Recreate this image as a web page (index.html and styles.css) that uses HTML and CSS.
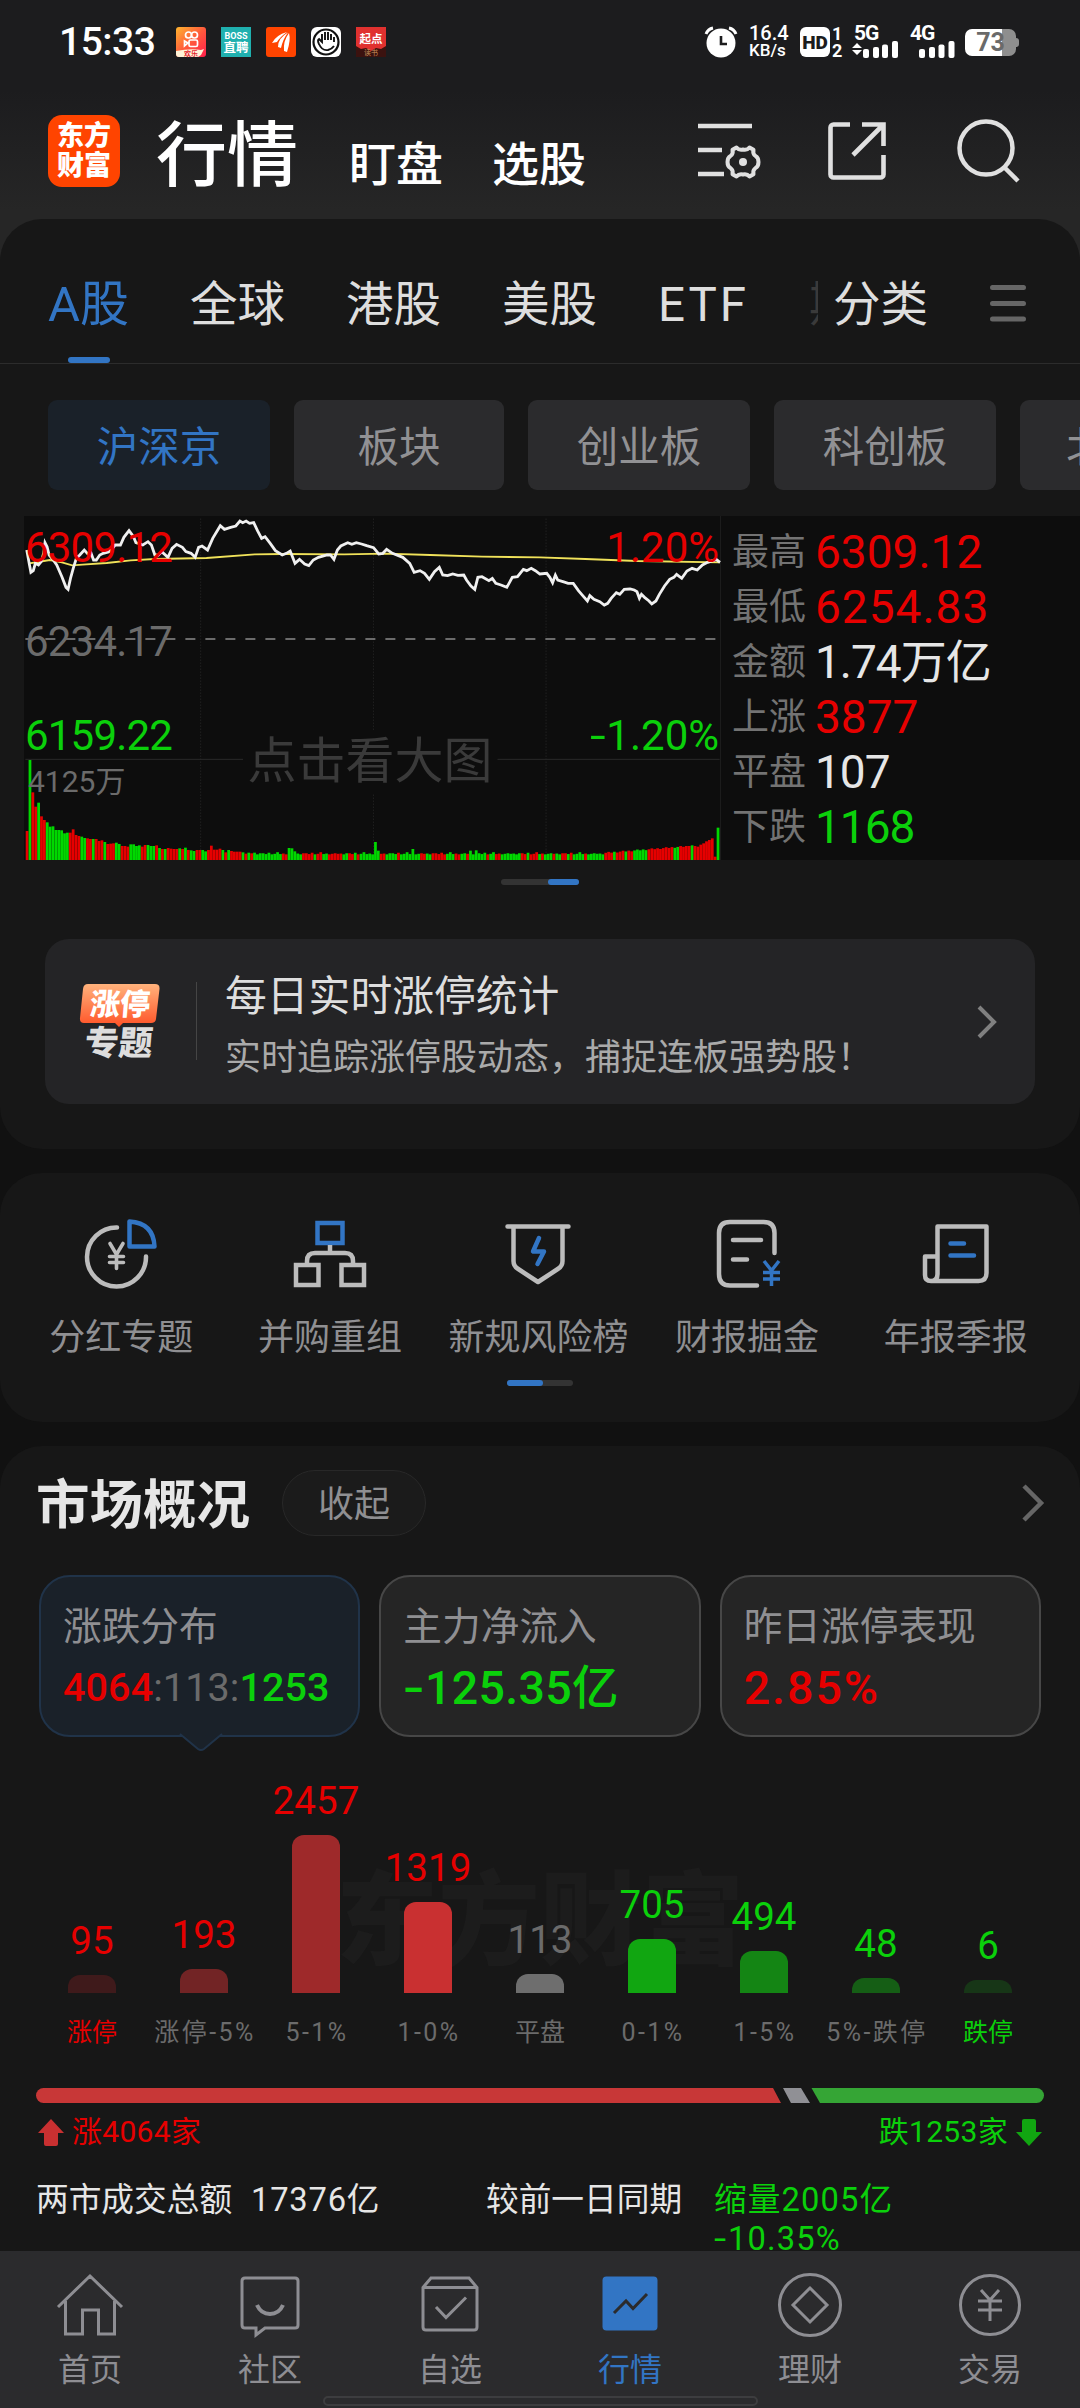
FILE: index.html
```html
<!DOCTYPE html>
<html lang="zh-CN">
<head>
    <meta charset="UTF-8">
    <meta name="viewport" content="width=device-width, initial-scale=1.0">
    <title>行情</title>
    <link rel="stylesheet" href="styles.css">
</head>
<body>
    <div class="top">
        <div class="status">
            <span class="time">15:33</span>
            <div class="apps">
                <svg width="30" height="30" viewBox="0 0 30 30">
                    <defs>
                        <linearGradient id="ks" x1="0" y1="0" x2="1" y2="1"><stop offset="0" stop-color="#ffb52e"/><stop offset=".5" stop-color="#ff5a3c"/><stop offset="1" stop-color="#ff1f4b"/></linearGradient>
                    </defs>
                    <rect width="30" height="30" rx="3" fill="url(#ks)"/>
                    <g fill="none" stroke="#fff" stroke-width="1.7"><circle cx="12.5" cy="8" r="3"/><circle cx="18.5" cy="8" r="3"/><rect x="13" y="13" width="8.5" height="6.5" rx="1.5"/><path d="M12 16l-3.500-2v5z"/></g>
                    <path d="M0 24q15-3 25-1l3-1-3 6-3 2H3a3 3 0 0 1-3-3z" fill="#fff3d8"/>
                    <text x="8" y="29" font-size="7" fill="#e3202c" font-weight="700">欢乐</text>
                </svg>
                <svg width="30" height="30" viewBox="0 0 30 30">
                    <rect width="30" height="30" fill="#1fb0af"/>
                    <text x="15" y="11.500" font-size="9" font-weight="700" fill="#fff" text-anchor="middle">BOSS</text>
                    <text x="15" y="25" font-size="12.500" font-weight="700" fill="#fff" text-anchor="middle">直聘</text>
                </svg>
                <svg width="30" height="30" viewBox="0 0 30 30">
                    <rect width="30" height="30" rx="3" fill="#ff4400"/>
                    <path d="M6 16Q10 8 21 5Q14 10 11 15zM12 20Q12 11 22 5.500Q17 12 15 21zM18 24Q17 14 23 6Q25 13 21 25z" fill="#fff"/>
                </svg>
                <svg width="30" height="30" viewBox="0 0 30 30">
                    <rect width="30" height="30" rx="6" fill="#fff"/>
                    <circle cx="15" cy="15" r="12.500" fill="none" stroke="#111" stroke-width="2.200"/>
                    <path d="M8 17Q6 13 8 12L11 15V7M14 13V5M17 13V5M20 13V7M23 15V10M8 17q3 7 9 6q4-1 6-4" fill="none" stroke="#111" stroke-width="1.900"/>
                </svg>
                <svg width="30" height="30" viewBox="0 0 30 30">
                    <rect width="30" height="30" fill="#3b120f"/>
                    <path d="M0 0h30v19l-5 3-5-1-5 3-5-3-5 1-5-3z" fill="#e0312f"/>
                    <text x="15" y="16" font-size="11.500" font-weight="700" fill="#fff" text-anchor="middle">起点</text>
                    <text x="15" y="28" font-size="7" fill="#c9925a" text-anchor="middle">读书</text>
                </svg>
            </div>
            <div class="signals">
                <svg class="alarm" width="34" height="32" viewBox="0 0 34 32">
                    <circle cx="17" cy="17" r="14.500" fill="#fff"/>
                    <path d="M2 8Q4 3 9 2M32 8Q30 3 25 2" fill="none" stroke="#fff" stroke-width="3"/>
                    <path d="M17 10v8h6" fill="none" stroke="#1c1c1e" stroke-width="2.600"/>
                </svg>
                <div class="speed"><span>16.4</span><span>KB/s</span></div>
                <div class="hd">HD</div>
                <div class="sims"><span>1</span><span>2</span></div>
                <div class="net net-5g">
                    <span>5G</span>
                    <svg width="46" height="17" viewBox="0 0 46 17" fill="#fff"><path d="M5 2l5 5H0zM5 14l5-5H0z"/><rect x="11" y="8" width="6" height="9" rx="2"/><rect x="21" y="6" width="6" height="11" rx="2"/><rect x="30" y="3.500" width="6" height="13.500" rx="2"/><rect x="40" y="0" width="6" height="17" rx="2"/></svg>
                </div>
                <div class="net net-4g">
                    <span>4G</span>
                    <svg width="36" height="17" viewBox="0 0 36 17" fill="#fff"><rect x="0" y="8" width="6" height="9" rx="2"/><rect x="10" y="6" width="6" height="11" rx="2"/><rect x="19.500" y="3.500" width="6" height="13.500" rx="2"/><rect x="29.500" y="0" width="6" height="17" rx="2"/></svg>
                </div>
                <div class="battery"><span>73</span></div>
            </div>
        </div>
        <div class="header">
            <div class="logo"><span>东方</span><span>财富</span></div>
            <span class="h-main">行情</span>
            <span class="h-sub">盯盘</span>
            <span class="h-sub">选股</span>
            <div class="h-icons">
                <svg width="63" height="66" viewBox="0 0 63 66" fill="none" stroke="#e0e0e0" stroke-width="4.500">
                    <path d="M0 11h54M0 35h24M0 59h26"/>
                    <path d="M38.500 32.500q2.500 3 6.500 2q4 1 6.500-2l4 2.300q-1 4 2 6.200q3 1.500 3 6t-3 6q-3 2.200-2 6.200l-4 2.300q-2.500-3-6.500-2q-4-1-6.500 2l-4-2.300q1-4-2-6.200q-3-1.500-3-6t3-6q3-2.200 2-6.200z" stroke-width="4" stroke-linejoin="round"/>
                    <circle cx="45" cy="47" r="4" fill="#e0e0e0" stroke="none"/>
                </svg>
                <svg width="58" height="58" viewBox="0 0 58 58" fill="none" stroke="#e0e0e0" stroke-width="4.600">
                    <path d="M22 2.500H5.500a3 3 0 0 0-3 3v47a3 3 0 0 0 3 3h47a3 3 0 0 0 3-3V33M34 2.500h21.500V24M55 3L25 33"/>
                </svg>
                <svg width="64" height="64" viewBox="0 0 64 64" fill="none" stroke="#e0e0e0" stroke-width="4.500">
                    <circle cx="29" cy="29" r="26.500"/><path d="M47.500 48.500l13.500 13.500"/>
                </svg>
            </div>
        </div>
    </div>

    <div class="content">
        <div class="panel market">
            <div class="tabs">
                <span class="tab on">A股</span>
                <span class="tab">全球</span>
                <span class="tab">港股</span>
                <span class="tab">美股</span>
                <span class="tab etf">ETF</span>
                <span class="tab cut">期</span>
                <span class="tab more">分类</span>
                <svg width="36" height="37" viewBox="0 0 36 37" stroke="#666" stroke-width="5" stroke-linecap="round"><path d="M2.500 2.500h31M2.500 18.500h31M2.500 34h31"/></svg>
            </div>
            <div class="chips">
                <span class="chip on">沪深京</span>
                <span class="chip short">板块</span>
                <span class="chip">创业板</span>
                <span class="chip">科创板</span>
                <span class="chip">北证50</span>
            </div>
            <div class="quote">
                <div class="chart">
                    <svg id="chart" width="697" height="344" viewBox="70 48 2024 1032" preserveAspectRatio="none">
                        <path class="grid-v" d="M583 56V1080M1085 56V1080M1586 56V1080"/>
                        <path class="grid-h" d="M74 778H708M1445 778H2090"/>
                        <path class="mid" d="M74 417H2080"/>
                        <polyline class="avg" points="85,190 110,186 145,180 180,187 210,196 240,194 310,189 380,181 450,177 600,174 740,163 820,162 1000,163 1120,161 1250,165 1400,170 1568,172 1700,177 1850,183 2091,187"/>
                        <polyline class="price" points="78,150 85,190 90,217 97,212 103,190 112,195 120,185 127,160 131,128 137,140 143,165 155,180 165,195 180,230 192,262 198,268 205,235 213,205 222,175 232,165 245,150 258,165 265,160 272,180 280,180 290,165 300,160 318,155 335,135 350,135 360,112 375,92 388,110 395,128 415,135 430,125 440,135 450,165 460,165 470,155 488,172 500,145 513,133 530,142 540,155 555,160 567,172 577,142 587,138 603,150 618,115 640,77 652,88 670,82 685,78 697,63 705,68 715,63 725,70 737,68 748,92 760,115 770,110 785,130 800,152 820,165 832,160 843,153 857,190 870,178 885,192 897,197 910,180 925,172 950,165 960,165 970,178 980,150 990,138 1010,128 1022,133 1035,128 1050,132 1065,137 1085,143 1100,162 1112,160 1123,148 1140,160 1170,172 1190,190 1203,217 1220,212 1233,220 1247,238 1262,215 1276,202 1286,225 1300,227 1315,222 1330,226 1347,225 1355,240 1368,258 1379,268 1388,232 1400,230 1420,242 1430,235 1440,250 1455,255 1472,262 1488,232 1503,230 1520,208 1530,212 1543,205 1555,212 1568,222 1588,220 1597,232 1605,248 1613,225 1620,240 1635,245 1650,250 1665,250 1680,272 1695,290 1706,303 1713,287 1725,298 1742,305 1755,315 1765,310 1775,295 1790,278 1800,283 1813,268 1830,267 1842,270 1850,275 1857,295 1863,283 1872,292 1885,303 1893,312 1905,303 1915,283 1930,258 1945,238 1957,232 1965,223 1980,235 1995,213 2010,205 2025,210 2040,195 2055,187 2080,178 2091,187"/>
                        <g id="volume"></g>
                    </svg>
                    <span class="tag hi red">6309.12</span>
                    <span class="tag hi right red">1.20%</span>
                    <span class="tag ref gray">6234.17</span>
                    <span class="tag lo green">6159.22</span>
                    <span class="tag lo right green"><i class="minus">-</i>1.20%</span>
                    <span class="tag vol gray">4125万</span>
                    <span class="tag tip">点击看大图</span>
                </div>
                <div class="stats">
                    <div><label>最高</label><b class="red">6309.12</b></div>
                    <div><label>最低</label><b class="red wide">6254.83</b></div>
                    <div><label>金额</label><b class="tight">1.74万亿</b></div>
                    <div><label>上涨</label><b class="red">3877</b></div>
                    <div><label>平盘</label><b class="tight">107</b></div>
                    <div><label>下跌</label><b class="green tight">1168</b></div>
                </div>
            </div>
            <div class="dots dots-chart"><i></i></div>
            <div class="banner">
                <svg class="badge" width="82" height="78" viewBox="0 0 82 78">
                    <defs>
                        <linearGradient id="zt" x1="0" y1="0" x2="0" y2="1"><stop offset="0" stop-color="#ffb27c"/><stop offset="1" stop-color="#ff5226"/></linearGradient>
                    </defs>
                    <path d="M9 1H76q5 0 4.500 5L77 36q-.5 4-5 4H44l-4 4-4-4H5q-4.500 0-4-5L4 6Q4.500 1 9 1z" fill="url(#zt)"/>
                    <text x="43" y="32" font-size="30" font-weight="900" fill="#fff" text-anchor="middle" transform="skewX(-5)">涨停</text>
                    <text x="45" y="72" font-size="34" font-weight="900" fill="#ddd" text-anchor="middle" transform="skewX(-5)">专题</text>
                </svg>
                <div class="banner-text">
                    <span class="b-title">每日实时涨停统计</span>
                    <span class="b-sub">实时追踪涨停股动态，捕捉连板强势股！</span>
                </div>
                <svg width="20" height="34" viewBox="0 0 20 34" fill="none" stroke="#808080" stroke-width="4"><path d="M2 2l15 15L2 32"/></svg>
            </div>
        </div>

        <div class="panel tools">
            <div class="tool-row">
                <div class="tool">
                    <svg width="76" height="72" viewBox="0 0 76 72" fill="none" stroke="#bcbcbc" stroke-width="4.500">
                        <path d="M34 9.500A29.500 29.500 0 1 0 63 38.500" stroke-linecap="round"/>
                        <path d="M46.500 3.500V28.500H71.500Q70.500 5 46.500 3.500z" stroke="#3275c4" stroke-linejoin="round"/>
                        <path d="M27 25.500L33.500 36.500L40 25.500M33.500 36.500V50.500M26.500 38.500h14M26.500 44.500h14" stroke-width="3.600" stroke-linecap="round"/>
                    </svg>
                    <span>分红专题</span>
                </div>
                <div class="tool">
                    <svg width="76" height="72" viewBox="0 0 76 72" fill="none" stroke="#bcbcbc" stroke-width="4.500">
                        <rect x="25.500" y="5" width="25" height="20" stroke="#3275c4"/>
                        <path d="M38 27v8M15 46V43q0-8 8-8H53q8 0 8 8v3"/>
                        <rect x="4" y="47" width="22.500" height="20"/><rect x="49.500" y="47" width="22.500" height="20"/>
                    </svg>
                    <span>并购重组</span>
                </div>
                <div class="tool">
                    <svg width="76" height="72" viewBox="0 0 76 72" fill="none" stroke="#bcbcbc" stroke-width="4.500">
                        <path d="M7.500 8.500H68.500M13.500 10V43q0 5 4 7.500L38 64L58.500 50.500q4-2.500 4-7.500V10" stroke-linecap="round" stroke-linejoin="round"/>
                        <path d="M39 20L33 33.500H44L37.500 46" stroke="#3275c4" stroke-linejoin="round" stroke-linecap="round"/>
                    </svg>
                    <span>新规风险榜</span>
                </div>
                <div class="tool">
                    <svg width="76" height="72" viewBox="0 0 76 72" fill="none" stroke="#bcbcbc" stroke-width="4.500" stroke-linecap="round">
                        <path d="M65.500 35V15Q65.500 4 54.500 4H21Q10 4 10 15V56Q10 67.500 21 67.500H48"/>
                        <path d="M24 22H52M24 41.500H38"/>
                        <path d="M55 43L62.500 52.500L70 43M62.500 52.500V68M54 54.500H71M54 61H71" stroke="#3275c4" stroke-width="3.500" stroke-linecap="butt"/>
                    </svg>
                    <span>财报掘金</span>
                </div>
                <div class="tool">
                    <svg width="76" height="72" viewBox="0 0 76 72" fill="none" stroke="#bcbcbc" stroke-width="4.500">
                        <path d="M19.500 56V8.500H68.500V55q0 8-8 8H13q-6 0-6-6V38.500H19.500V56q0 7-6.500 7" stroke-linejoin="round"/>
                        <path d="M32.500 25.500H46M32.500 37.500H56" stroke="#3275c4" stroke-linecap="round"/>
                    </svg>
                    <span>年报季报</span>
                </div>
            </div>
            <div class="dots dots-tools"><i></i></div>
        </div>

        <div class="panel overview">
            <div class="ov-head">
                <h2>市场概况</h2>
                <span class="fold">收起</span>
                <svg width="24" height="38" viewBox="0 0 24 38" fill="none" stroke="#666" stroke-width="4.500"><path d="M3 2l17 17L3 36"/></svg>
            </div>
            <div class="cards">
                <div class="card on">
                    <span class="c-name">涨跌分布</span>
                    <span class="c-val ratio"><em class="red">4064</em><em class="gray">:113:</em><em class="green">1253</em></span>
                    <svg class="arrow" width="42" height="18" viewBox="0 0 42 18"><path d="M0 0L18 15q3 2 6 0L42 0" fill="#1a2129" stroke="#203349" stroke-width="2"/></svg>
                </div>
                <div class="card">
                    <span class="c-name">主力净流入</span>
                    <span class="c-val green"><i class="minus">-</i>125.35亿</span>
                </div>
                <div class="card">
                    <span class="c-name">昨日涨停表现</span>
                    <span class="c-val c-pct red">2.85%</span>
                </div>
            </div>
            <div class="dist">
                <span class="watermark">东方财富</span>
                <div class="dist-cols" id="dist"></div>
            </div>
            <svg class="ratio-bar" width="1008" height="15" viewBox="0 0 1008 15">
                <path d="M7.500 0H737l8 15H7.500a7.500 7.500 0 0 1 0-15z" fill="#c83737"/>
                <path d="M747 0h18l9 15h-19z" fill="#909095"/>
                <path d="M775.500 0H1000.500a7.500 7.500 0 0 1 0 15H784z" fill="#35a535"/>
            </svg>
            <div class="updown">
                <span class="red"><svg width="26" height="27" viewBox="0 0 26 27"><path d="M13 0L26 14H20V25q0 2-2 2H8q-2 0-2-2V14H0z" fill="#c93031"/></svg>涨4064家</span>
                <span class="green">跌1253家<svg width="26" height="27" viewBox="0 0 26 27"><path d="M13 27L26 13H20V2q0-2-2-2H8Q6 0 6 2V13H0z" fill="#11a611"/></svg></span>
            </div>
            <div class="turnover">
                <span class="t-total">两市成交总额</span>
                <span class="t-num">17376亿</span>
                <span class="t-prev">较前一日同期</span>
                <span class="t-diff green">缩量2005亿<br><i class="minus">-</i>10.35%</span>
            </div>
        </div>
    </div>

    <div class="nav">
        <div class="nav-item">
            <svg width="66" height="66" viewBox="0 0 66 66"><path d="M1 34L33 3L65 34M8.500 28V61H25.500V37H41.500V61H57.500V28"/></svg>
            <span>首页</span>
        </div>
        <div class="nav-item">
            <svg width="66" height="66" viewBox="0 0 66 66"><path d="M8 5H58q3 0 3 3V52q0 3-3 3H28L19 62V55H8q-3 0-3-3V8q0-3 3-3z"/><path d="M20 32q4 9 13 9t13-9" stroke-width="4"/></svg>
            <span>社区</span>
        </div>
        <div class="nav-item">
            <svg width="66" height="66" viewBox="0 0 66 66"><path d="M6 14.500L14 5H52L60 14.500V54q0 3-3 3H9q-3 0-3-3zM6 14.500H60"/><path d="M19 34L29 44.500L49 24.500"/></svg>
            <span>自选</span>
        </div>
        <div class="nav-item on">
            <svg width="66" height="66" viewBox="0 0 66 66"><rect x="5.500" y="3.500" width="55" height="54" rx="4" fill="#3275c4" stroke="none"/><path d="M17 40L29 28L36 35.500L50 21" stroke="#2b2b2d"/></svg>
            <span>行情</span>
        </div>
        <div class="nav-item">
            <svg width="66" height="66" viewBox="0 0 66 66"><circle cx="33" cy="32" r="30.500"/><path d="M33 15L50 32L33 49L16 32z"/></svg>
            <span>理财</span>
        </div>
        <div class="nav-item">
            <svg width="66" height="66" viewBox="0 0 66 66"><circle cx="33" cy="32" r="29.500"/><path d="M24 17L33 27L42 17M33 27V48M21 28H45M21 37H45"/></svg>
            <span>交易</span>
        </div>
        <div class="home-bar"></div>
    </div>

    <script>
        // one letter per minute: r = up, g = down
        var color = "rgrrgrrggggggggrrrrggrrgrrrgrrrggrrrggggrrgggrgrgrrrrgrgrggrrgg" +
            "rrrrrgrgrrrrgrgrggggggggggrrgggggrrrrgrrggrrrrrggrrgrgggg" +
            "gggrrggggrgggggggrrggrrrrrgggrrggrggggggrggrrgggggggrrgrrrgrgggrggrrgrg" +
            "gggrggggggrrrgrrrgrrgggggrrrrrrrrrggrrrrgrrrrrrrg";
        var vol = [87, 300, 203, 160, 172, 131, 120, 113, 100, 101, 90, 90, 89, 80, 82, 82, 92, 75, 72, 70, 66, 65, 63, 63,
            63, 57, 59, 54, 48, 49, 50, 52, 48, 42, 42, 40, 47, 47, 42, 44, 40, 45, 45, 42, 42, 44, 36, 33, 33, 36, 34, 33,
            33, 35, 33, 37, 30, 29, 27, 30, 30, 30, 26, 30, 43, 31, 31, 34, 30, 23, 30, 27, 25, 25, 25, 23, 19, 22, 20, 22];
        var spike = { 91: 36, 92: 35, 93: 26, 121: 54, 122: 28, 134: 33, 154: 28, 156: 29, 229: 42, 230: 42, 231: 44, 232: 42, 233: 40,
            234: 46, 235: 50, 236: 56, 237: 60, 238: 65, 239: 10, 240: 97 };
        var bars = "";
        for (var i = 0; i <= 240; i++) {
            var h = vol[i] || 17 + (i * 7 % 5) * (i % 3 ? 1 : 2) * 0.8;
            if (i > 200 && i < 229) h = 19 + (i - 200) * 0.7 + i * 7 % 5;
            if (spike[i]) h = spike[i];
            var c = color[i] == "g";
            if (i > 232) c = i == 240;
            if (i == 121) c = true;
            bars += `<rect x="${75 + i * 8.36}" y="${1080 - h}" width="8" height="${h}" fill="${c ? "#00d800" : "#e60000"}"/>`;
        }
        document.getElementById("volume").innerHTML = bars;

        var dist = [
            ["涨停", 95, 18, "#3f1a1b", "red", "red"],
            ["涨停-5%", 193, 24, "#722425", "red", "span"],
            ["5-1%", 2457, 158, "#9e292a", "red", "span"],
            ["1-0%", 1319, 91, "#c93031", "red", "span"],
            ["平盘", 113, 19, "#6e6e6e", "gray", ""],
            ["0-1%", 705, 54, "#11a611", "green", "span"],
            ["1-5%", 494, 42, "#148514", "green", "span"],
            ["5%-跌停", 48, 15, "#155e15", "green", "span"],
            ["跌停", 6, 13, "#173617", "green", "green"]
        ];
        document.getElementById("dist").innerHTML = dist.map(d => `
            <div class="col">
                <span class="num ${d[4]}">${d[1]}</span>
                <div class="bar" style="height:${d[2]}px;background:${d[3]}"></div>
                <span class="range ${d[5]}">${d[0]}</span>
            </div>`).join("");
    </script>
</body>
</html>
```
FILE: styles.css
```css
* {
    box-sizing: border-box;
}
body {
    margin: 0;
    width: 1080px;
    height: 2408px;
    display: flex;
    flex-direction: column;
    overflow: hidden;
    background: #111;
    color: #e6e6e6;
    font-family: Roboto, "Noto Sans CJK SC", sans-serif;
    white-space: nowrap;
}
svg {
    display: block;
    flex: none;
    overflow: visible;
}
.red { color: #e60000; }
.green { color: #0bd00b; }
.gray { color: #6b6b6b; }
.minus {
    display: inline-block;
    font-style: normal;
    transform: scaleX(1.35);
    transform-origin: 0 50%;
    margin-right: .12em;
}

/* status bar + header */
.top {
    height: 261px;
    margin-bottom: -42px;
    background: linear-gradient(#1c1c1e 90px, #262626 210px);
    flex: none;
}
.status {
    display: flex;
    align-items: center;
    height: 84px;
    padding-left: 59px;
    color: #fff;
}
.time {
    width: 117px;
    font-size: 39px;
    font-weight: 500;
    line-height: 84px;
    letter-spacing: -.5px;
}
.apps {
    display: flex;
    gap: 15px;
}
.signals {
    display: flex;
    align-items: center;
    margin-left: 318px;
}
.speed, .sims {
    display: flex;
    flex-direction: column;
    font-size: 18px;
    font-weight: 500;
    line-height: 17px;
}
.speed {
    width: 39px;
    margin-left: 11px;
}
.speed span:first-child {
    font-size: 20px;
}
.speed span:last-child {
    font-size: 17px;
}
.hd {
    width: 30px;
    height: 30px;
    margin-left: 12px;
    border-radius: 6px;
    background: #fff;
    color: #1c1c1e;
    font-size: 19px;
    font-weight: 900;
    line-height: 31px;
    text-align: center;
}
.sims {
    width: 11px;
    margin-left: 2px;
    font-weight: 700;
}
.net {
    height: 32px;
    font-size: 21px;
    font-weight: 700;
    line-height: 15px;
    letter-spacing: -1px;
}
.net span {
    display: block;
}
.net-5g {
    width: 46px;
    margin-left: 9px;
}
.net-4g {
    width: 46px;
    margin-left: 12px;
}
.net-4g svg {
    margin-left: 9px;
}
.net-5g span {
    margin-left: 2px;
}
.battery {
    position: relative;
    width: 51px;
    height: 27px;
    margin-left: 9px;
    border-radius: 7px;
    background: linear-gradient(90deg, #fff 37px, #8e8e8e 37px);
    color: #6a6a6a;
    font-size: 25px;
    font-weight: 700;
    line-height: 28px;
    text-align: center;
}
.battery::after {
    content: "";
    position: absolute;
    right: -3px;
    top: 9px;
    width: 3px;
    height: 9px;
    border-radius: 0 3px 3px 0;
    background: #8e8e8e;
}
.header {
    display: flex;
    height: 135px;
    padding: 31px 59px 0 48px;
}
.logo {
    display: flex;
    flex-direction: column;
    width: 72px;
    height: 72px;
    padding-top: 6px;
    border-radius: 14px;
    background: #ff4400;
    color: #fff;
    font-size: 27px;
    font-weight: 900;
    line-height: 30px;
    text-align: center;
}
.h-main {
    margin: 5px 0 0 36px;
    font-size: 71px;
    font-weight: 500;
    line-height: 72px;
    color: #fff;
}
.h-sub {
    margin: 20px 0 0 49px;
    font-size: 47px;
    font-weight: 500;
    line-height: 60px;
    color: #fff;
}
.h-sub:nth-child(3) {
    margin-left: 51px;
}
.h-icons {
    display: flex;
    margin-left: auto;
}
.h-icons svg:nth-child(2) {
    margin: 7px 71px 0 67px;
}
.h-icons svg:nth-child(3) {
    margin-top: 4px;
}

.content {
    flex: 1;
    min-height: 0;
    overflow: hidden;
}
.panel {
    border-radius: 42px;
    background: #171717;
}

/* market panel */
.market {
    height: 930px;
}
.tabs {
    display: flex;
    height: 145px;
    padding: 56px 54px 0 48px;
    border-bottom: 1px solid #2c2c2c;
}
.tab {
    position: relative;
    height: 88px;
    margin-right: 61px;
    font-size: 47.500px;
    font-weight: 400;
    line-height: 60px;
    color: #dedede;
}
.tab.on {
    width: 82px;
    color: #3275c4;
    font-size: 49px;
    margin-right: 60px;
}
.tab.on::after {
    content: "";
    position: absolute;
    left: 20px;
    bottom: 0;
    width: 42px;
    height: 6px;
    border-radius: 3px;
    background: #3275c4;
}
.tab.etf {
    width: 90px;
    letter-spacing: 3px;
}
.tab.cut {
    width: 9px;
    overflow: hidden;
    color: #3a3a3a;
    margin-right: 15px;
}
.tab.more {
    margin-right: 0;
}
.tabs svg {
    margin: 10px 0 0 auto;
}
.chips {
    display: flex;
    gap: 24px;
    padding: 36px 0 26px 48px;
    overflow: hidden;
}
.chip {
    flex: none;
    width: 222px;
    height: 90px;
    border-radius: 9px;
    background: #2b2b2d;
    color: #919194;
    font-size: 41.500px;
    line-height: 95px;
    text-align: center;
}
.chip.short {
    width: 210px;
}
.chip.on {
    background: #1a2129;
    color: #3275c4;
}
.quote {
    display: flex;
    height: 344px;
    margin-left: 24px;
    background: #0d0d0d;
}
.chart {
    position: relative;
    width: 697px;
    border-right: 1px solid #1c1c1c;
}
.chart polyline, .chart path {
    fill: none;
    vector-effect: non-scaling-stroke;
}
.grid-v {
    stroke: #2a2a2a;
    stroke-dasharray: 1 2;
}
.grid-h {
    stroke: #2a2a2a;
}
.mid {
    stroke: #8a8a8a;
    stroke-width: 1.5;
    stroke-dasharray: 10 10;
}
.avg {
    stroke: #f0e25a;
    stroke-width: 1.9;
}
.price {
    stroke: #f0f0f0;
    stroke-width: 2.8;
}
.tag {
    position: absolute;
    left: 1px;
    font-size: 42px;
    line-height: 44px;
    letter-spacing: -.8px;
}
.tag.hi { top: 10px; }
.tag.ref { top: 104px; }
.tag.lo { top: 198px; }
.tag.right {
    left: auto;
    right: 1px;
    letter-spacing: 0;
}
.tag.vol {
    left: 4px;
    top: 244px;
    font-size: 30px;
    letter-spacing: 0;
}
.tag.tip {
    left: 219px;
    top: 214px;
    width: 254px;
    font-size: 49px;
    line-height: 64px;
    letter-spacing: 0;
    text-align: center;
    color: #3a3a3a;
    background: #0d0d0d;
}
.stats {
    padding: 8px 0 0 11px;
}
.stats div {
    display: flex;
    height: 55px;
    line-height: 57px;
}
.stats label {
    width: 83px;
    font-size: 37px;
    color: #737373;
}
.stats b {
    font-size: 46px;
    font-weight: 400;
}
.stats b.wide {
    letter-spacing: 1px;
}
.stats b.tight {
    letter-spacing: -1px;
}
.dots {
    height: 6px;
    border-radius: 3px;
    background: #333;
}
.dots i {
    display: block;
    height: 6px;
    border-radius: 3px;
    background: #3275c4;
}
.dots-chart {
    width: 78px;
    margin: 19px auto 54px;
}
.dots-chart i {
    width: 31px;
    margin-left: auto;
}
.banner {
    display: flex;
    align-items: center;
    height: 165px;
    margin: 0 45px;
    padding: 0 38px 0 34px;
    border-radius: 24px;
    background: #242426;
}
.banner-text {
    display: flex;
    flex-direction: column;
    margin: 0 auto 0 35px;
    padding: 11px 0 0 29px;
    position: relative;
}
.banner-text::before {
    content: "";
    position: absolute;
    left: 0;
    top: 27px;
    width: 1px;
    height: 78px;
    background: #454545;
}
.b-title {
    font-size: 41.800px;
    line-height: 62px;
    color: #dedede;
}
.b-sub {
    font-size: 36px;
    line-height: 60px;
    color: #aaa;
}

/* shortcuts */
.tools {
    height: 249px;
    margin-top: 24px;
    padding-top: 45px;
}
.tool-row {
    display: flex;
    padding: 0 20px 0 17px;
}
.tool {
    display: flex;
    flex: 1;
    flex-direction: column;
    align-items: center;
}
.tool span {
    margin-top: 23px;
    font-size: 36px;
    line-height: 50px;
    color: #8f8f92;
}
.dots-tools {
    width: 66px;
    margin: 17px auto 0;
}
.dots-tools i {
    width: 36px;
}

/* overview */
.overview {
    height: 1000px;
    margin-top: 24px;
    padding-top: 24px;
}
.ov-head {
    display: flex;
    align-items: center;
    height: 66px;
    padding: 0 35px 0 36px;
}
.ov-head h2 {
    margin: 0;
    width: 246px;
    font-size: 53.500px;
    line-height: 66px;
    padding-top: 6px;
}
.ov-head svg {
    margin-left: auto;
}
.fold {
    width: 144px;
    height: 66px;
    border: 1px solid #282828;
    border-radius: 33px;
    background: #1b1b1b;
    color: #8f8f92;
    font-size: 36px;
    line-height: 68px;
    text-align: center;
}
.cards {
    display: flex;
    gap: 19px;
    padding: 39px 39px 0;
}
.card {
    position: relative;
    display: flex;
    flex: 1;
    flex-direction: column;
    height: 162px;
    padding: 25px 0 0 22px;
    border: 2px solid #474747;
    border-radius: 31px;
    background: #252525;
}
.card.on {
    background: #1a2129;
    border-color: #203349;
}
.c-name {
    font-size: 38.700px;
    line-height: 50px;
    color: #8f8f92;
}
.c-val {
    font-size: 46.500px;
    font-weight: 500;
    line-height: 50px;
    margin-top: 11px;
    letter-spacing: .3px;
}
.c-val.c-pct {
    letter-spacing: 2px;
}
.c-val.ratio {
    font-size: 39.500px;
    letter-spacing: .1px;
}
.c-val em {
    font-style: normal;
}
.c-val em.gray {
    font-weight: 400;
}
.arrow {
    position: absolute;
    left: 139px;
    top: 157px;
}
.dist {
    position: relative;
    height: 314px;
    padding: 0 36px;
}
.watermark {
    position: absolute;
    left: 336px;
    top: 120px;
    font-size: 102px;
    font-weight: 900;
    line-height: 130px;
    color: #1c1c1c;
}
.dist-cols {
    position: relative;
    display: flex;
    align-items: flex-end;
    height: 314px;
}
.col {
    display: flex;
    flex: 1;
    width: 112px;
    flex-direction: column;
    align-items: center;
}
.num {
    font-size: 38.500px;
    line-height: 40px;
    margin-bottom: 14px;
}
.bar {
    width: 48px;
    border-radius: 12px 12px 0 0;
}
.range {
    margin-top: 22px;
    font-size: 25px;
    line-height: 36px;
    color: #6b6b6b;
}
.range.span {
    letter-spacing: 2.400px;
    margin-right: -2px;
}
.range.red { color: #e60000; }
.range.green { color: #0bd00b; }
.ratio-bar {
    margin: 37px 36px 0;
}
.updown {
    display: flex;
    justify-content: space-between;
    margin-top: 8px;
    padding: 0 38px;
    font-size: 30px;
    line-height: 42px;
    letter-spacing: .3px;
}
.updown span {
    display: flex;
    align-items: center;
    gap: 8px;
}
.turnover {
    display: flex;
    margin-top: 28px;
    padding-left: 36px;
    font-size: 32.700px;
    line-height: 39px;
}
.t-total { width: 215px; }
.t-num {
    width: 235px;
    letter-spacing: .8px;
}
.t-prev { width: 228px; }
.t-diff { letter-spacing: 1.1px; }

/* bottom nav */
.nav {
    position: relative;
    display: flex;
    flex: none;
    height: 157px;
    padding-top: 22px;
    background: #2b2b2d;
}
.nav-item {
    display: flex;
    flex: 1;
    flex-direction: column;
    align-items: center;
    color: #8e8e93;
    font-size: 32px;
    line-height: 44px;
}
.nav-item svg {
    margin-bottom: 9px;
    fill: none;
    stroke: #8e8e93;
    stroke-width: 3;
}
.nav-item.on {
    color: #3275c4;
}
.home-bar {
    position: absolute;
    left: 323px;
    bottom: 2px;
    width: 435px;
    height: 10px;
    border: 2px solid #3d3d3f;
    border-radius: 5px;
}
```
